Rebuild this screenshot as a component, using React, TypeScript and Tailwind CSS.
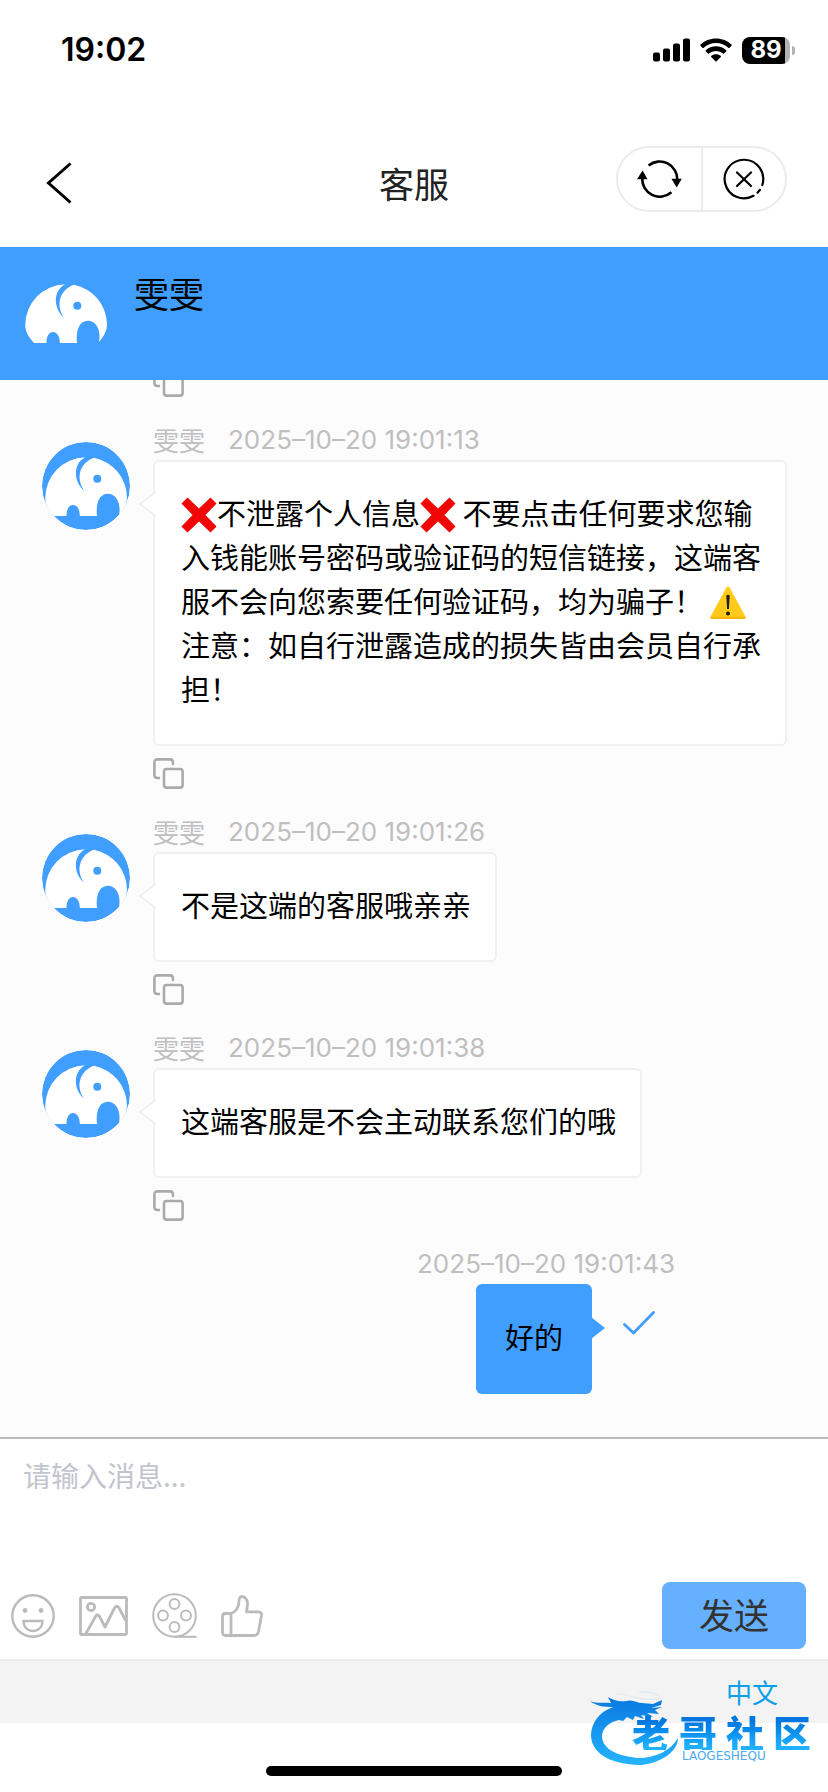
import { useState } from "react";

interface Message {
  id: number;
  name: string;
  time: string;
  content: React.ReactNode;
}

const CrossMark: React.FC = () => (
  <svg
    viewBox="0 0 36 36"
    className="inline-block size-9 align-[-8px]"
    role="img"
    aria-label="❌"
  >
    <path
      d="M6.500 0.500L18 11.500L29.500 0.500L35.500 6.500L24.500 18L35.500 29.500L29.500 35.500L18 24.500L6.500 35.500L0.500 29.500L11.500 18L0.500 6.500Z"
      fill="#f20505"
    />
  </svg>
);

const WarningMark: React.FC = () => (
  <svg
    viewBox="0 0 36 36"
    className="inline-block size-9 align-[-8px]"
    role="img"
    aria-label="⚠️"
  >
    <path
      d="M16.4 2.6Q18 0.4 19.6 2.6L35.4 31.4Q36 34 33.6 34H2.4Q0 34 0.6 31.4Z"
      fill="#ffca1a"
    />
    <path d="M0.6 32Q0.4 34 2.4 34H33.6Q35.6 34 35.4 32Z" fill="#f5b400" />
    <path d="M16.3 10.5Q18 8.8 19.7 10.5L18.9 24H17.1Z" fill="#1c1c1c" />
    <circle cx="18" cy="28.6" r="2" fill="#1c1c1c" />
  </svg>
);

const messages: Message[] = [
  {
    id: 1,
    name: "雯雯",
    time: "2025–10–20 19:01:13",
    content: (
      <>
        <CrossMark />
        不泄露个人信息
        <CrossMark />{" "}
        不要点击任何要求您输入钱能账号密码或验证码的短信链接，这端客服不会向您索要任何验证码，均为骗子！{" "}
        <WarningMark />
        注意：如自行泄露造成的损失皆由会员自行承担！
      </>
    ),
  },
  {
    id: 2,
    name: "雯雯",
    time: "2025–10–20 19:01:26",
    content: "不是这端的客服哦亲亲",
  },
  {
    id: 3,
    name: "雯雯",
    time: "2025–10–20 19:01:38",
    content: "这端客服是不会主动联系您们的哦",
  },
];

const Avatar: React.FC<{ className?: string }> = (props) => (
  <svg
    viewBox="0 0 88 88"
    className={`size-[88px] shrink-0 rounded-full ${props.className ?? ""}`}
    role="img"
    aria-label="雯雯"
  >
    <circle cx="44" cy="44" r="44" fill="#409eff" />
    <path
      d="M43 15.3A41 41 0 0 0 3.2 56C3.2 63 6.5 69 11.5 74H24.5C24.500 67 27 63 31 63C35 63 37.800 67 37.800 74H55C53.500 60 58 51.700 66 51.700C74 51.700 79.500 61 77 74C82 69 85 62 85 55A41 41 0 0 0 52 15.700C37 21 33.500 37 42.300 49C31 39 31 22 43 15.300Z"
      fill="#fff"
    />
    <circle cx="55.3" cy="36.7" r="4" fill="#409eff" />
  </svg>
);

const CopyButton: React.FC<{ className?: string }> = (props) => (
  <button
    type="button"
    aria-label="复制"
    className={`block cursor-pointer text-[#aaaaaa] ${props.className ?? ""}`}
  >
    <svg
      viewBox="0 0 31 31"
      className="size-[31px]"
      fill="none"
      stroke="currentColor"
      strokeWidth="2.6"
      strokeLinecap="round"
    >
      <rect x="11" y="11" width="18.6" height="18.6" rx="2.6" />
      <path d="M6 20H4.5Q1.4 20 1.4 17V4.5Q1.4 1.4 4.5 1.4H17Q20 1.4 20 4.5V6" />
    </svg>
  </button>
);

const StatusBar: React.FC = () => (
  <div className="flex h-[100px] items-center justify-between pl-[61px] pr-[33px] font-[Inter,sans-serif]">
    <span className="text-[32px] font-semibold leading-10">19:02</span>
    <div className="flex items-center gap-[10px]">
      <svg viewBox="0 0 37 24" className="h-6 w-[37px]">
        <rect x="0" y="14.5" width="7" height="9" rx="2" />
        <rect x="10" y="10.5" width="7" height="13" rx="2" />
        <rect x="20" y="5.5" width="7" height="18" rx="2" />
        <rect x="30" y="0.5" width="7" height="23" rx="2" />
      </svg>
      <svg viewBox="0 0 32 24" className="h-6 w-8">
        <path d="M16 0.5C22 0.5 27.5 2.8 31.5 6.6Q32 7.2 31.5 7.8L29.4 9.9Q28.9 10.3 28.3 9.8C25 6.7 20.7 5.1 16 5.1S7 6.7 3.7 9.8Q3.1 10.3 2.6 9.9L0.5 7.8Q0 7.2 0.5 6.6C4.5 2.8 10 0.5 16 0.5Z" />
        <path d="M16 8.3C20 8.3 23.5 9.8 26.2 12.2Q26.7 12.8 26.2 13.4L24 15.5Q23.5 15.9 22.9 15.5C21 13.9 18.6 13 16 13S11 13.9 9.1 15.5Q8.5 15.9 8 15.5L5.8 13.4Q5.3 12.8 5.8 12.2C8.5 9.8 12 8.3 16 8.3Z" />
        <path d="M16 16.2C17.9 16.2 19.5 16.8 20.8 17.9Q21.3 18.4 20.8 19L16.6 23.2Q16 23.7 15.4 23.2L11.2 19Q10.7 18.4 11.2 17.9C12.5 16.8 14.1 16.2 16 16.2Z" />
      </svg>
      <div className="flex items-center gap-[2px]">
        <div className="flex h-[27px] w-12 items-center justify-center rounded-lg bg-[linear-gradient(to_right,#000_43px,#b3b3b3_43px)] text-[24px] font-bold leading-none text-white">
          89
        </div>
        <div className="h-[9px] w-[3px] rounded-r-full bg-[#b3b3b3]" />
      </div>
    </div>
  </div>
);

const NavBar: React.FC = () => (
  <header className="grid h-[147px] grid-cols-3 items-center px-[41px] pt-[18px]">
    <button type="button" aria-label="返回" className="w-9 cursor-pointer pl-[5px]">
      <svg
        viewBox="0 0 26 42"
        className="h-[42px] w-[26px]"
        fill="none"
        stroke="#000"
        strokeWidth="3"
      >
        <path d="M24.5 1.5L2.5 21L24.5 40.5" />
      </svg>
    </button>
    <h1 className="text-center text-[35px] leading-[50px] text-[#222222]">
      客服
    </h1>
    <div className="mb-2 flex h-[66px] w-[171px] justify-self-end rounded-full border-2 border-[#ebebeb]">
      <button
        type="button"
        aria-label="刷新"
        className="flex flex-1 cursor-pointer items-center justify-center border-r-2 border-[#ebebeb]"
      >
        <svg
          viewBox="0 0 45 38"
          className="h-[38px] w-[45px]"
          fill="none"
          stroke="#000"
          strokeWidth="2.6"
        >
          <path d="M11.6 5.5A17.5 17.5 0 0 1 40.2 20" />
          <path d="M34.4 32.3A17.5 17.5 0 0 1 5.3 18" />
          <path d="M34.5 18.8H44.8L39.7 27.5Z" fill="#000" stroke="none" />
          <path d="M0 19.2H10.5L5.6 10.5Z" fill="#000" stroke="none" />
        </svg>
      </button>
      <button
        type="button"
        aria-label="关闭"
        className="flex flex-1 cursor-pointer items-center justify-center"
      >
        <svg
          viewBox="0 0 42 42"
          className="size-[42px]"
          fill="none"
          stroke="#000"
          strokeWidth="2.2"
          strokeLinecap="round"
        >
          <path d="M39.3 27A19.3 19.3 0 1 0 30.5 37.8" />
          <path d="M34.5 34.7L37 31.8" />
          <path d="M14 14.5L28 28M28 14.5L14 28" />
        </svg>
      </button>
    </div>
  </header>
);

const MessageItem: React.FC<{ message: Message }> = ({ message }) => (
  <li className="flex gap-[23px] pl-[42px] pr-[41px] pt-[23px]">
    <Avatar className="mt-[22px]" />
    <div className="flex min-w-0 flex-1 flex-col items-start">
      <div className="flex h-10 items-center gap-[23px] text-[26px] leading-9 text-[#bfbfbf]">
        <span>{message.name}</span>
        <time className="font-[Inter,sans-serif]">{message.time}</time>
      </div>
      <div className="relative rounded-md border-2 border-[#f0f0f0] bg-white pb-[34px] pl-[26px] pr-6 pt-7">
        <svg
          viewBox="0 0 18 26"
          className="absolute -left-[17px] top-[29px] h-[26px] w-[18px]"
        >
          <path d="M18 1L2 13L18 25" fill="#fff" stroke="#f0f0f0" strokeWidth="2" />
        </svg>
        <p className="text-[29px] leading-[44px]">{message.content}</p>
      </div>
      <CopyButton className="mt-3" />
    </div>
  </li>
);

const OwnMessage: React.FC = () => (
  <li className="flex flex-col items-end pb-[43px] pr-[153px] pt-[23px]">
    <time className="flex h-10 items-center font-[Inter,sans-serif] text-[26px] leading-9 text-[#bfbfbf]">
      2025–10–20 19:01:43
    </time>
    <div className="flex">
      <div className="relative rounded-md bg-[#409eff] px-[29px] pb-9 pt-[30px]">
        <p className="text-[29px] leading-[44px]">好的</p>
        <svg
          viewBox="0 0 14 22"
          className="absolute -right-[13px] top-[33px] h-[22px] w-[14px]"
        >
          <path d="M0 0L14 11L0 22Z" fill="#409eff" />
        </svg>
      </div>
      <svg
        viewBox="0 0 32 24"
        className="ml-[31px] mr-5 mt-[27px] h-6 w-8"
        fill="none"
        stroke="#409eff"
        strokeWidth="2.8"
        strokeLinecap="round"
        strokeLinejoin="round"
      >
        <path d="M1.5 13.5L10.5 22L30.5 1.5" />
      </svg>
    </div>
  </li>
);

const toolButton = "cursor-pointer text-[#bbbbbb]";

const Composer: React.FC = () => {
  const [text, setText] = useState("");

  return (
    <form
      className="border-t-2 border-[#bbbbbb] bg-white"
      onSubmit={(e) => e.preventDefault()}
    >
      <textarea
        aria-label="消息"
        value={text}
        onChange={(e) => setText(e.target.value)}
        placeholder="请输入消息..."
        className="block h-[130px] w-full resize-none px-[23px] pt-[14px] text-[28px] leading-[44px] outline-none placeholder:text-[#c0c4cc]"
      />
      <div className="flex items-center justify-between pb-[10px] pl-[11px] pr-[22px] pt-[13px]">
        <div className="flex items-center gap-6">
          <button type="button" aria-label="表情" className={toolButton}>
            <svg
              viewBox="0 0 44 44"
              className="size-11"
              fill="none"
              stroke="currentColor"
              strokeWidth="2.4"
            >
              <circle cx="22" cy="22" r="20.7" />
              <circle cx="14" cy="16.5" r="2.4" fill="currentColor" stroke="none" />
              <circle cx="30" cy="16.5" r="2.4" fill="currentColor" stroke="none" />
              <path d="M12.5 27H31.5C31.5 33 27.5 37 22 37S12.5 33 12.5 27Z" />
            </svg>
          </button>
          <button type="button" aria-label="图片" className={toolButton}>
            <svg
              viewBox="0 0 49 40"
              className="h-10 w-[49px]"
              fill="none"
              stroke="currentColor"
              strokeWidth="2.8"
              strokeLinejoin="round"
            >
              <rect x="1.5" y="1.5" width="46" height="37" rx="1" />
              <circle cx="12" cy="11" r="3.6" />
              <path d="M7 37.5L16.5 20.5Q18.5 17.5 20.5 20.5L26 31L35.5 12Q38 8.5 40 12L47 25" />
            </svg>
          </button>
          <button type="button" aria-label="视频" className={toolButton}>
            <svg
              viewBox="0 0 45 45"
              className="size-[45px]"
              fill="none"
              stroke="currentColor"
              strokeWidth="2"
            >
              <circle cx="22.5" cy="22.5" r="21.3" />
              <circle cx="22.5" cy="11" r="4.9" />
              <circle cx="11" cy="22.5" r="4.9" />
              <circle cx="34" cy="22.5" r="4.9" />
              <circle cx="22.5" cy="34" r="4.9" />
              <path d="M22.5 43.8H44.5" />
            </svg>
          </button>
          <button type="button" aria-label="点赞" className={toolButton}>
            <svg
              viewBox="0 0 42 42"
              className="size-[42px]"
              fill="none"
              stroke="currentColor"
              strokeWidth="2.8"
              strokeLinejoin="round"
            >
              <path d="M10 18.5C15 17 17.5 13 18 6.5C18 3 19 1.5 21 1.5C24 1.5 27 5 26.5 10L25.5 16.8H37.5Q41 17.3 40.5 20.5L37.5 36.5Q36.8 40.5 33 40.5H4.5Q1.5 40.5 1.5 37.5V21.5Q1.5 18.5 4.5 18.5H10V40" />
            </svg>
          </button>
        </div>
        <button
          type="submit"
          className="h-[67px] w-36 cursor-pointer rounded-lg bg-[#66b1ff] pb-1 text-[35px] leading-[50px] text-[#333333]"
        >
          发送
        </button>
      </div>
    </form>
  );
};

const Watermark: React.FC = () => (
  <div className="pointer-events-none absolute bottom-[26px] right-[17px] h-[76px] w-[222px]">
    <svg viewBox="0 0 222 76" className="absolute inset-0 size-full">
      <defs>
        <linearGradient id="dragon" x1="0" y1="0" x2="0" y2="1">
          <stop offset="0" stopColor="#0a78df" />
          <stop offset="1" stopColor="#25b4ff" />
        </linearGradient>
      </defs>
      <path
        d="M1 11C8 14 15 12 22 13L19 7C26 11 31 12 37 11C44 9 48 13 53 13L64 14L73 10L72 15L62 18L73 17L66 20L70 24L58 23L64 27L52 25L55 29L46 26L44 30L38 27L34 31L30 30C20 32 13 38 13 47C14 59 28 66 49 68C68 68 82 60 89 48C89 60 75 72 53 75C26 75 3 66 2 46C2 33 10 22 24 17C15 17 7 16 1 11Z"
        fill="url(#dragon)"
      />
      <path
        d="M27 4C38 3 48 11 70 9M50 2C60 2 70 3 72 9"
        fill="none"
        stroke="#d3e6f5"
        strokeWidth="0.8"
      />
    </svg>
    <div className="absolute right-0 top-6 flex flex-col">
      <div className="flex gap-[9px] bg-linear-to-b from-[#0077e0] from-20% to-[#1fb0ff] to-90% bg-clip-text text-[38px] font-black leading-[36px] text-transparent">
        <span>老</span>
        <span>哥</span>
        <span>社</span>
        <span>区</span>
      </div>
      <span className="pl-[50px] font-['DejaVu_Sans',sans-serif] text-[12px] leading-3 text-[#4ba9ee]">
        LAOGESHEQU
      </span>
    </div>
  </div>
);

const App: React.FC = () => {
  return (
    <div className="relative min-h-screen bg-white font-['Noto_Sans_CJK_SC',sans-serif] text-black">
      <StatusBar />
      <NavBar />
      <section className="flex h-[133px] items-start gap-6 bg-[#409eff] pl-[22px] pt-[22px]">
        <Avatar />
        <h2 className="text-[35px] leading-[48px]">雯雯</h2>
      </section>
      <main className="overflow-hidden bg-[#fcfcfc]">
        <CopyButton className="-mt-[14px] ml-[153px]" />
        <ul>
          {messages.map((message) => (
            <MessageItem key={message.id} message={message} />
          ))}
          <OwnMessage />
        </ul>
      </main>
      <Composer />
      <footer>
        <div className="flex h-16 items-center justify-end border-t-2 border-[#ebebeb] bg-[#f3f3f3] pr-[50px]">
          <a href="#lang" className="text-[26px] leading-9 text-[#0a9fe6]">
            中文
          </a>
        </div>
        <div className="flex h-[69px] items-end justify-center pb-4">
          <div className="h-[10px] w-[296px] rounded-full bg-black" />
        </div>
      </footer>
      <Watermark />
    </div>
  );
};

export default App;
